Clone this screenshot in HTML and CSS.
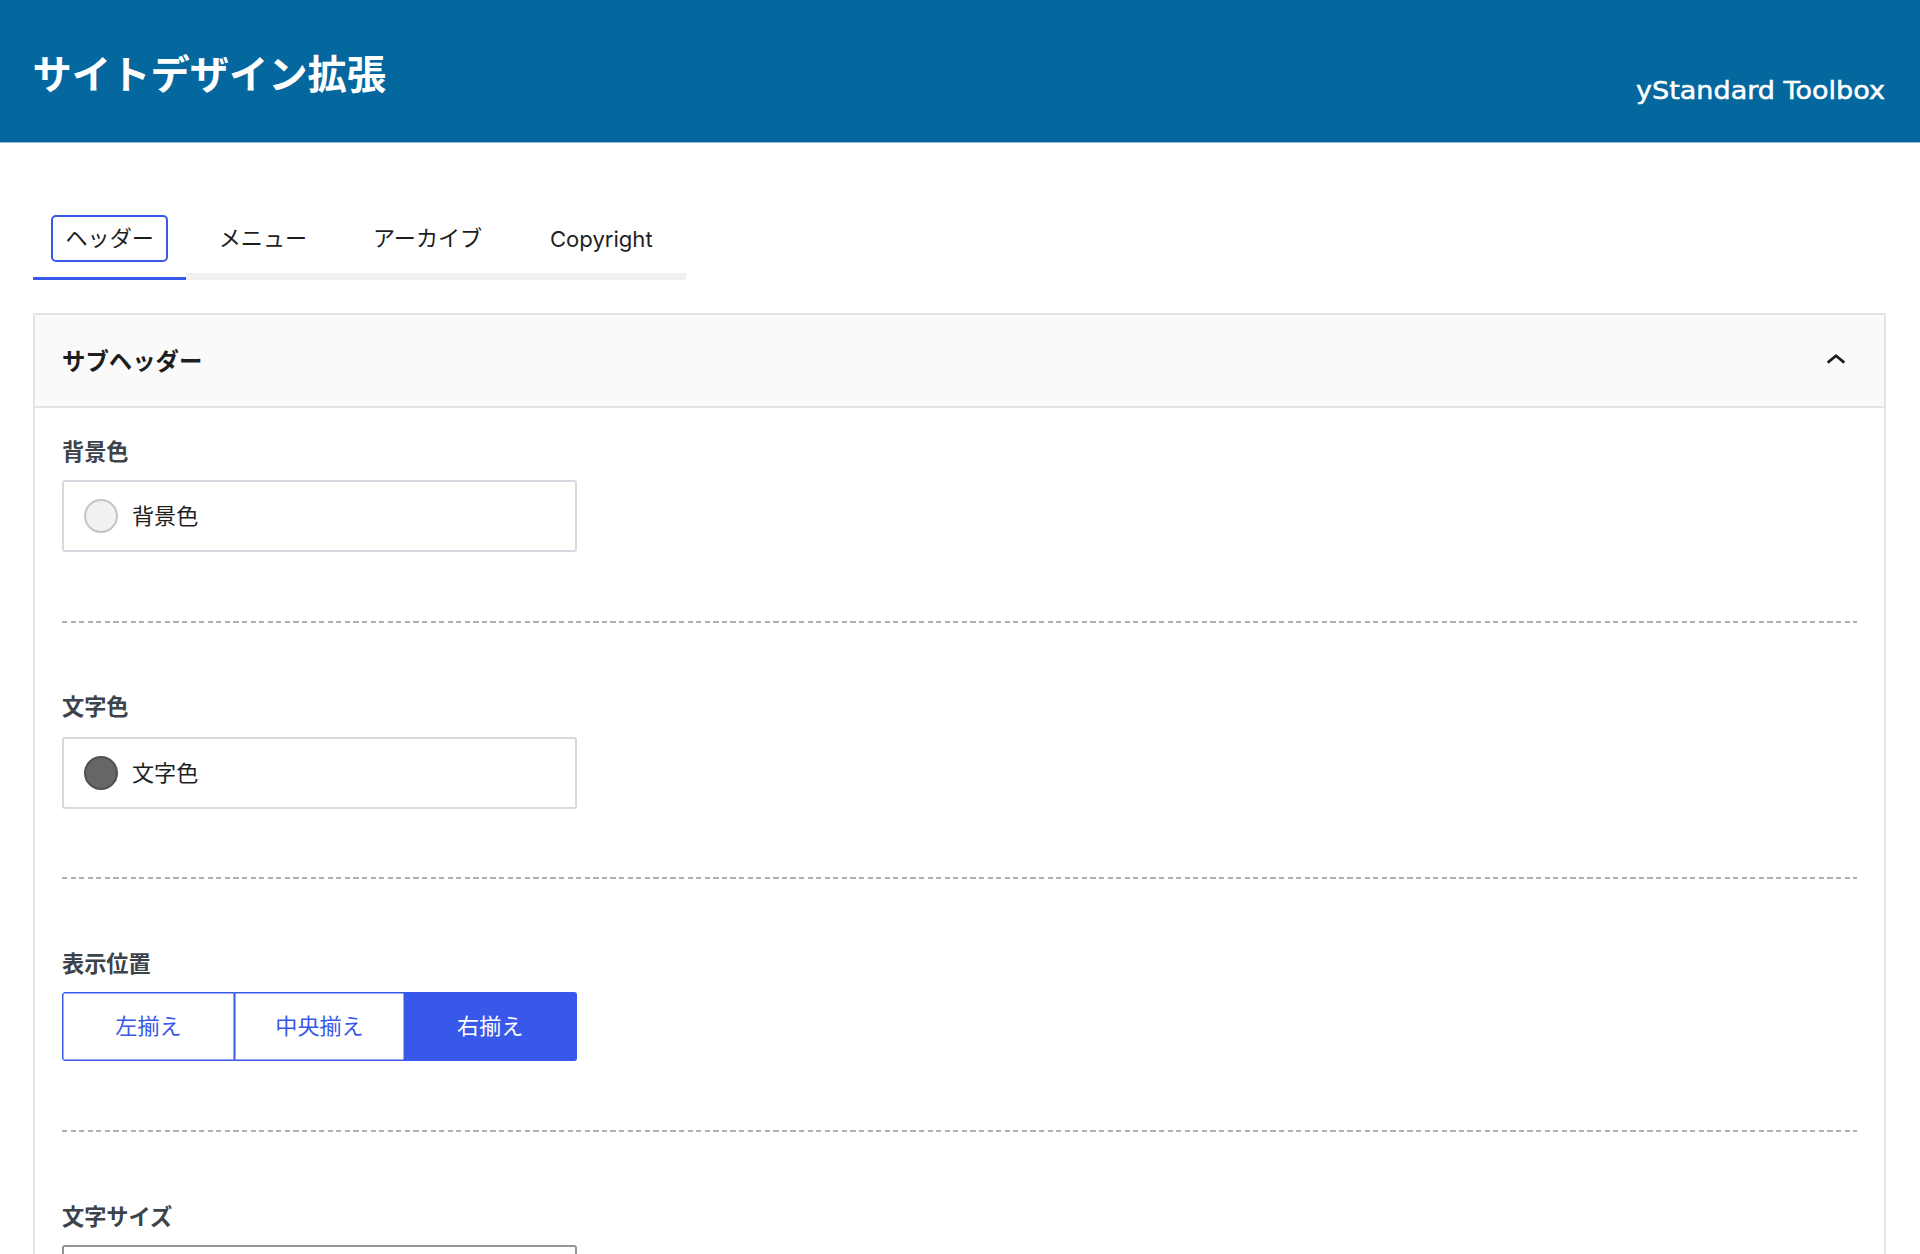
FILE: index.html
```html
<!DOCTYPE html>
<html lang="ja">
<head>
<meta charset="utf-8">
<title>サイトデザイン拡張</title>
<link rel="stylesheet" href="styles.css">
</head>
<body>
<header class="page-header">
  <h1 class="page-title">サイトデザイン拡張</h1>
  <svg class="brand" width="252" height="34" viewBox="0 0 252 34" role="img"><text x="2" y="26" textLength="249" lengthAdjust="spacingAndGlyphs">yStandard Toolbox</text></svg>
</header>
<main class="content">
  <nav class="tabs">
    <button class="tab tab-active">ヘッダー</button>
    <button class="tab">メニュー</button>
    <button class="tab">アーカイブ</button>
    <button class="tab tab-latin">Copyright</button>
  </nav>
  <section class="panel">
    <header class="panel-header">
      <h2 class="panel-title">サブヘッダー</h2>
      <svg class="chevron" width="22" height="14" viewBox="0 0 22 14"><path d="M2.7 10.6 11 3.8l8.3 6.8" fill="none" stroke="#1e1e1e" stroke-width="2.7"/></svg>
    </header>
    <div class="panel-body">
      <div class="field">
        <h3 class="label">背景色</h3>
        <button class="color-button"><span class="swatch swatch-light"></span>背景色</button>
      </div>
      <div class="divider divider-loose"></div>
      <div class="field">
        <h3 class="label label-loose">文字色</h3>
        <button class="color-button"><span class="swatch swatch-dark"></span>文字色</button>
      </div>
      <div class="divider divider-raised"></div>
      <div class="field">
        <h3 class="label">表示位置</h3>
        <div class="segments">
          <button class="segment">左揃え</button>
          <button class="segment">中央揃え</button>
          <button class="segment segment-active">右揃え</button>
        </div>
      </div>
      <div class="divider divider-loose"></div>
      <div class="field">
        <h3 class="label">文字サイズ</h3>
        <input class="size-input" type="text">
      </div>
    </div>
  </section>
</main>
</body>
</html>
```
FILE: styles.css
```css
* { box-sizing: border-box; }
html { overflow: hidden; }
body {
  margin: 0;
  height: 1254px;
  overflow: hidden;
  background: #fff;
  color: #1e1e1e;
  font: 22.1px/32px Inter, "Noto Sans CJK JP", sans-serif;
}
button, input { font: inherit; color: inherit; }
h1, h2, h3 { margin: 0; }
.page-header {
  display: flex;
  justify-content: space-between;
  height: 143px;
  padding: 46px 34px 0 32.5px;
  background: #04689f;
  border-bottom: 1px solid #8fbbd4;
  color: #fff;
}
.page-title { font-size: 39.3px; line-height: 58px; font-weight: 700; }
.brand { margin-top: 27px; }
.brand text { font: 25px "DejaVu Sans", sans-serif; fill: #fff; stroke: #fff; stroke-width: 0.5px; }
.content { padding: 57px 34px 0 33px; }
.tabs { display: flex; width: 653px; height: 80px; }
.tab {
  flex: none;
  width: 153.3px;
  padding: 2px 0 0;
  border: 0;
  border-bottom: 7px solid #f0f0f0;
  background: none;
}
.tab:nth-child(3) { width: 176px; }
.tab-latin { width: 170.4px; padding: 4px 0 0 1px; }
.tab-active {
  position: relative;
  padding-bottom: 4px;
  border-bottom: 3px solid #3858e9;
}
.tab-active::before {
  content: "";
  position: absolute;
  inset: 15px 18px 15px 18px;
  border: 2px solid #3858e9;
  border-radius: 5px;
}
.panel { margin-top: 33px; border: 2px solid #e4e4e4; }
.panel-header {
  display: flex;
  align-items: center;
  justify-content: space-between;
  height: 93px;
  padding: 0 37px 0 27px;
  background: #fafafa;
  border-bottom: 2px solid #e4e4e4;
}
.panel-title { padding-top: 2px; font-size: 23.4px; font-weight: 700; }
.chevron { margin-bottom: 3px; }
.panel-body { padding: 27px 27px 0; }
.label { height: 45px; font-size: 22.2px; line-height: 33px; font-weight: 700; color: #3c434a; }
.label-loose { height: 46px; line-height: 32px; }
.color-button {
  display: flex;
  align-items: center;
  gap: 14px;
  width: 514.5px;
  height: 72px;
  padding: 0 20px;
  border: 2px solid #d5d9e0;
  border-radius: 3px;
  background: #fff;
}
.swatch { width: 34px; height: 34px; border-radius: 50%; border: 2px solid #c4c4c6; background: #f1f1f3; }
.swatch-dark { background: #666; border-color: #525252; }
.divider {
  height: 2px;
  margin: 69px 0 67px;
  background: repeating-linear-gradient(90deg, #afafaf 0 5.2px, transparent 5.2px 8.57px);
}
.divider-loose { margin-bottom: 68px; }
.divider-raised { margin: 68px 0; }
.segments {
  display: grid;
  grid-template-columns: 173px 170px 171.5px;
  width: 514.5px;
  height: 69px;
}
.segment {
  padding: 0 0 2px;
  border: 1px solid #3858e9;
  border-left-width: 0;
  background: #fff;
  box-shadow: inset 0 0 0 0.5px #3858e9;
  color: #3858e9;
}
.segment:first-child { border-left-width: 1px; border-radius: 3px 0 0 3px; }
.segment-active { background: #3858e9; color: #fff; border-radius: 0 3px 3px 0; }
.size-input { display: block; width: 514.5px; height: 56px; border: 2px solid #949494; border-radius: 3px; }
```
